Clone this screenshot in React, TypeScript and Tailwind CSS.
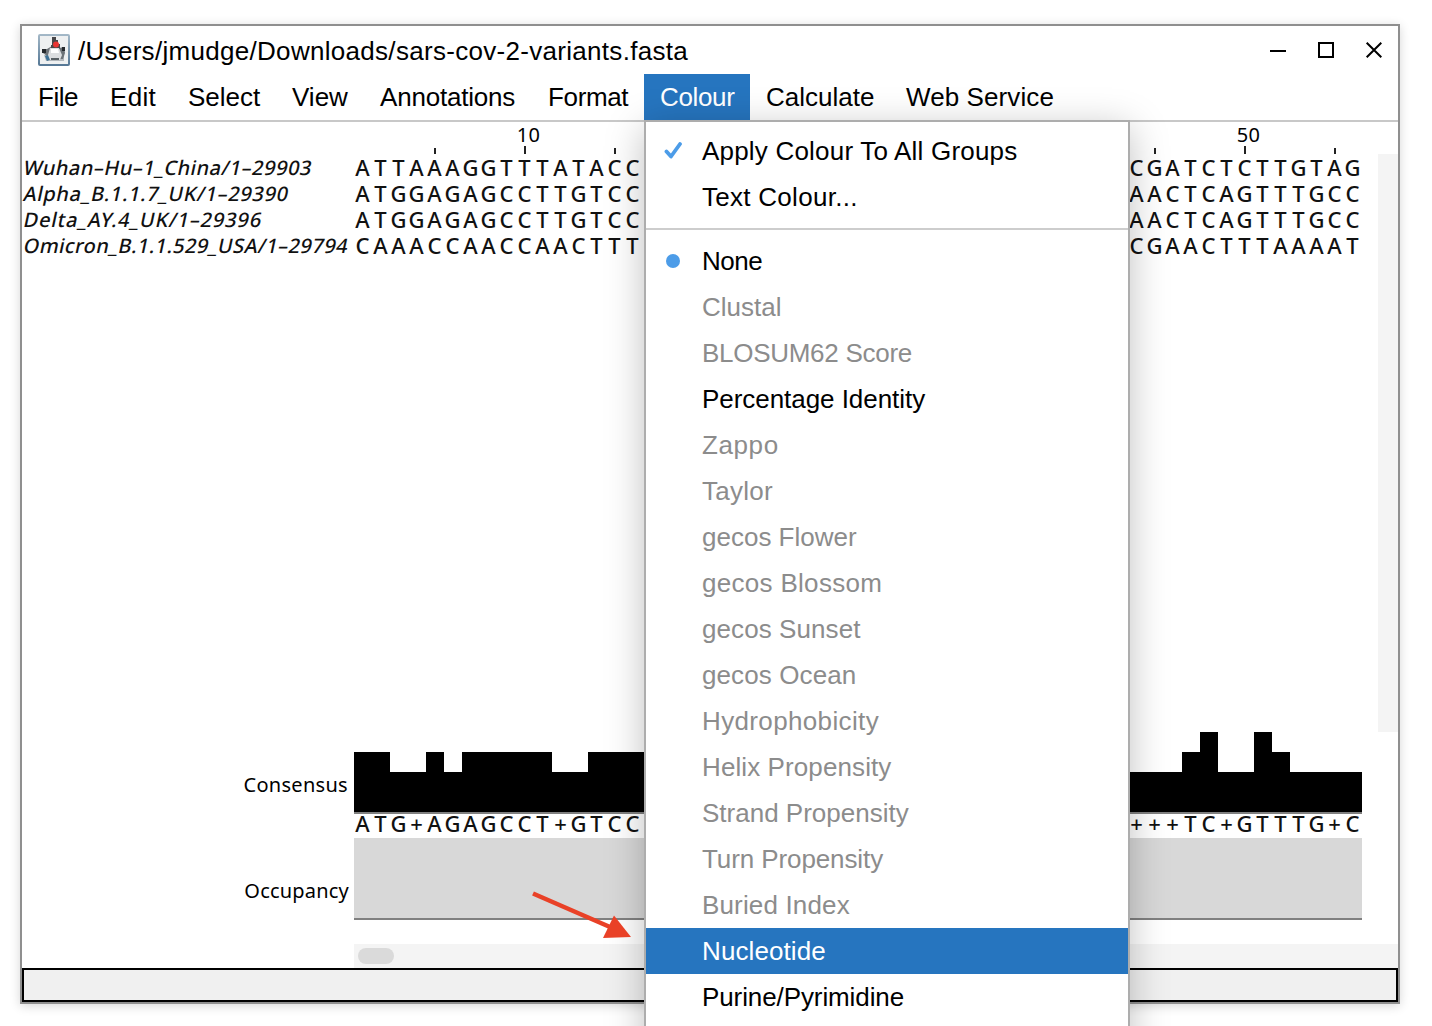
const MENUS: { label: string; width: string; track: string; active?: boolean }[] = [
  { label: "File", width: "w-[72px]", track: "tracking-[-0.5px]" },
  { label: "Edit", width: "w-[78px]", track: "tracking-[0.3px]" },
  { label: "Select", width: "w-[104px]", track: "tracking-[0px]" },
  { label: "View", width: "w-[88px]", track: "tracking-[0px]" },
  { label: "Annotations", width: "w-[168px]", track: "tracking-[-0.2px]" },
  { label: "Format", width: "w-[112px]", track: "tracking-[-0.35px]" },
  { label: "Colour", width: "w-[106px]", track: "tracking-[-0.35px]", active: true },
  { label: "Calculate", width: "w-[140px]", track: "tracking-[0px]" },
  { label: "Web Service", width: "w-[180px]", track: "tracking-[0.1px]" },
];

const SCHEMES: { label: string; state: "on" | "off" | "active"; track: string; checked?: boolean }[] = [
  { label: "None", state: "on", track: "tracking-[-0.5px]", checked: true },
  { label: "Clustal", state: "off", track: "tracking-[0px]" },
  { label: "BLOSUM62 Score", state: "off", track: "tracking-[-0.28px]" },
  { label: "Percentage Identity", state: "on", track: "tracking-[-0.05px]" },
  { label: "Zappo", state: "off", track: "tracking-[0.6px]" },
  { label: "Taylor", state: "off", track: "tracking-[0.25px]" },
  { label: "gecos Flower", state: "off", track: "tracking-[0px]" },
  { label: "gecos Blossom", state: "off", track: "tracking-[0.3px]" },
  { label: "gecos Sunset", state: "off", track: "tracking-[0.08px]" },
  { label: "gecos Ocean", state: "off", track: "tracking-[0.1px]" },
  { label: "Hydrophobicity", state: "off", track: "tracking-[0.36px]" },
  { label: "Helix Propensity", state: "off", track: "tracking-[0.1px]" },
  { label: "Strand Propensity", state: "off", track: "tracking-[0px]" },
  { label: "Turn Propensity", state: "off", track: "tracking-[-0.1px]" },
  { label: "Buried Index", state: "off", track: "tracking-[0.15px]" },
  { label: "Nucleotide", state: "active", track: "tracking-[0.1px]" },
  { label: "Purine/Pyrimidine", state: "on", track: "tracking-[-0.1px]" },
];

const SEQUENCES = [
  { name: "Wuhan–Hu–1_China/1–29903", track: "tracking-[0.5px]", left: "ATTAAAGGTTTATACC", right: "CGATCTCTTGTAG" },
  { name: "Alpha_B.1.1.7_UK/1–29390", track: "tracking-[0.65px]", left: "ATGGAGAGCCTTGTCC", right: "AACTCAGTTTGCC" },
  { name: "Delta_AY.4_UK/1–29396", track: "tracking-[0.83px]", left: "ATGGAGAGCCTTGTCC", right: "AACTCAGTTTGCC" },
  { name: "Omicron_B.1.1.529_USA/1–29794", track: "tracking-[0.44px]", left: "CAAACCAACCAACTTT", right: "CGAACTTTAAAAT" },
];

const H = { a: "h-[40px]", b: "h-[60px]", c: "h-[80px]" } as const;
const BARS = ("bbaababbbbbaabbbb" + "a".repeat(26) + "aaabcaacbaaaa").split("") as (keyof typeof H)[];

function Residues({ text }: { text: string }) {
  return (
    <div className="flex">
      {text.split("").map((c, i) => (
        <span key={i} className="w-[18px] pr-[1px] flex justify-center">{c}</span>
      ))}
    </div>
  );
}

function Row({ left, right }: { left: string; right: string }) {
  return (
    <div className="flex gap-[486px] h-[26px] leading-[26px] text-[22px] font-medium text-[#111]">
      <Residues text={left} />
      <Residues text={right} />
    </div>
  );
}

function Tick({ label }: { label?: string }) {
  return (
    <div className="w-[18px] h-[32px] flex flex-col items-center justify-end">
      {label && <span className="text-[20px] leading-[22px] tracking-[0.4px] pl-[7px]">{label}</span>}
      <span className={label ? "w-[2px] h-[8px] bg-[#222]" : "w-[2px] h-[6px] bg-[#222]"} />
    </div>
  );
}

function AppIcon() {
  return (
    <svg width="32" height="32" viewBox="0 0 32 32">
      <defs>
        <linearGradient id="frame" x1="0" y1="0" x2="0" y2="1">
          <stop offset="0" stopColor="#a5b9c8" />
          <stop offset="1" stopColor="#557795" />
        </linearGradient>
      </defs>
      <rect width="32" height="32" rx="2" fill="url(#frame)" />
      <rect x="2" y="2" width="28" height="28" fill="#eef0f1" />
      <path d="M6 21h20v6H8z" fill="#b3b8bc" />
      <path d="M4 15h5l5-3v6l-5 4-4-3zM21 14l5-1 1 6-2 6h-3z" fill="#6d7378" />
      <path d="M7 22l6-2 3 4-7 3z" fill="#3c7196" />
      <path d="M14 3h4v3h2v4h2v5h-9v-4h1z" fill="#47474a" />
      <path d="M12 14h9l3 7-2 5H12l-2-5z" fill="#dcdee0" />
      <path d="M13 15h7l1 4h-8z" fill="#fff" />
      <path d="M4 15h4v4H4zM24 13h3v4h-3z" fill="#25292d" />
      <path d="M13 24h8v2h-8z" fill="#596064" />
      <circle cx="18" cy="10.5" r="3" fill="#e83432" />
    </svg>
  );
}

export default function App() {
  return (
    <div className="relative w-[1432px] h-[1026px] overflow-hidden bg-white pl-[20px] pt-[24px] font-['Liberation_Sans',sans-serif] text-black">
      <div className="flex flex-col w-[1380px] h-[980px] border-2 border-[#8f8f8f] bg-white shadow-[0_2px_10px_rgba(0,0,0,0.16)]">
        <div className="flex items-center h-[48px] pl-[16px] pr-[16px]">
          <AppIcon />
          <span className="ml-[8px] pt-[1px] text-[26px] leading-[30px] tracking-[0.3px] grow whitespace-nowrap">
            /Users/jmudge/Downloads/sars-cov-2-variants.fasta
          </span>
          <svg width="112" height="16" viewBox="0 0 112 16" fill="none" stroke="#000" strokeWidth="2">
            <path d="M0 9H16" />
            <path d="M49 1H63V15H49Z" />
            <path d="M96.700 .700L111.300 15.300M111.300 .700L96.700 15.300" />
          </svg>
        </div>

        <div className="flex h-[48px] border-b-2 border-[#c8c8c8] text-[26px] leading-[47px]">
          {MENUS.map((m) => (
            <div key={m.label} className={`${m.width} ${m.track} h-[46px] pl-[16px] whitespace-nowrap ${m.active ? "bg-[#2675bf] text-white" : ""}`}>
              {m.label}
            </div>
          ))}
        </div>

        <div className="flex h-[610px] font-['Noto_Sans',sans-serif]">
          <div className="w-[332px] pt-[33px] pl-[2px] text-[20px] font-medium text-[#111]">
            {SEQUENCES.map((s) => (
              <div key={s.name} className="h-[26px] leading-[26px] whitespace-nowrap">
                <span className={`inline-block -skew-x-12 ${s.track}`}>{s.name}</span>
              </div>
            ))}
          </div>
          <div className="grow">
            <div className="flex h-[32px]">
              {Array.from({ length: 56 }, (_, i) =>
                [4, 9, 14, 44, 49, 54].includes(i) ? (
                  <Tick key={i} label={i === 9 ? "10" : i === 49 ? "50" : undefined} />
                ) : (
                  <div key={i} className="w-[18px]" />
                ),
              )}
            </div>
            {SEQUENCES.map((s) => (
              <Row key={s.name} left={s.left} right={s.right} />
            ))}
          </div>
          <div className="w-[20px] mt-[32px] bg-[#f4f4f4]" />
        </div>

        <div className="flex h-[236px] font-['Noto_Sans',sans-serif]">
          <div className="w-[332px] pr-[5px] pt-[39px] text-[20px] leading-[28px] tracking-[0.2px] flex flex-col items-end gap-[78px]">
            <span className="pr-[1px] tracking-[0.3px]">Consensus</span>
            <span>Occupancy</span>
          </div>
          <div className="grow">
            <div className="w-[1008px] h-[82px] flex items-end border-b-2 border-[#808080]">
              {BARS.map((b, i) => (
                <div key={i} className={`w-[18px] bg-black ${H[b]}`} />
              ))}
            </div>
            <div className="h-[24px] -mt-[4px] mb-[4px]">
              <Row left="ATG+AGAGCCT+GTCC" right="+++TC+GTTTG+C" />
            </div>
            <div className="w-[1008px] h-[82px] bg-[#d8d8d8] border-b-2 border-[#808080]" />
            <div className="h-[24px] mt-[24px] bg-[#f4f4f4] p-[4px]">
              <div className="w-[36px] h-[16px] rounded-full bg-[#dadada]" />
            </div>
          </div>
        </div>

        <div className="h-[34px] border-2 border-black bg-[#f0f0f0]" />
      </div>

      <div className="absolute left-[644px] top-[120px] w-[486px] h-[940px] border-2 border-[#adadad] bg-white pt-[6px] text-[26px] leading-[47px] shadow-[0_8px_36px_rgba(0,0,0,0.25)]">
        <div className="flex items-center h-[46px]">
          <div className="w-[56px] pl-[18px]">
            <svg width="20" height="18" viewBox="0 0 20 18" fill="none" stroke="#4c9ce8" strokeWidth="3.800">
              <path d="M2.500 9.500L7 14.500L16 2" strokeLinecap="round" strokeLinejoin="round" />
            </svg>
          </div>
          <span className="tracking-[0.2px]">Apply Colour To All Groups</span>
        </div>
        <div className="h-[46px] pl-[56px] tracking-[0.28px]">Text Colour...</div>
        <div className="h-[2px] mt-[8px] mb-[8px] bg-[#cdcdcd]" />
        {SCHEMES.map((s) => (
          <div
            key={s.label}
            className={`flex items-center h-[46px] ${s.track} ${s.state === "active" ? "bg-[#2675bf] text-white" : s.state === "off" ? "text-[#8c8c8c]" : ""}`}
          >
            <div className="w-[56px] pl-[20px]">
              {s.checked && <div className="size-[14px] rounded-full bg-[#4c9ce8]" />}
            </div>
            <span>{s.label}</span>
          </div>
        ))}
      </div>

      <svg className="absolute left-[528px] top-[886px]" width="108" height="58" viewBox="0 0 108 58">
        <path d="M5 7.500L82 41" stroke="#e94127" strokeWidth="4.500" />
        <path d="M103 51L86 29.500L75 52Z" fill="#e94127" />
      </svg>
    </div>
  );
}
